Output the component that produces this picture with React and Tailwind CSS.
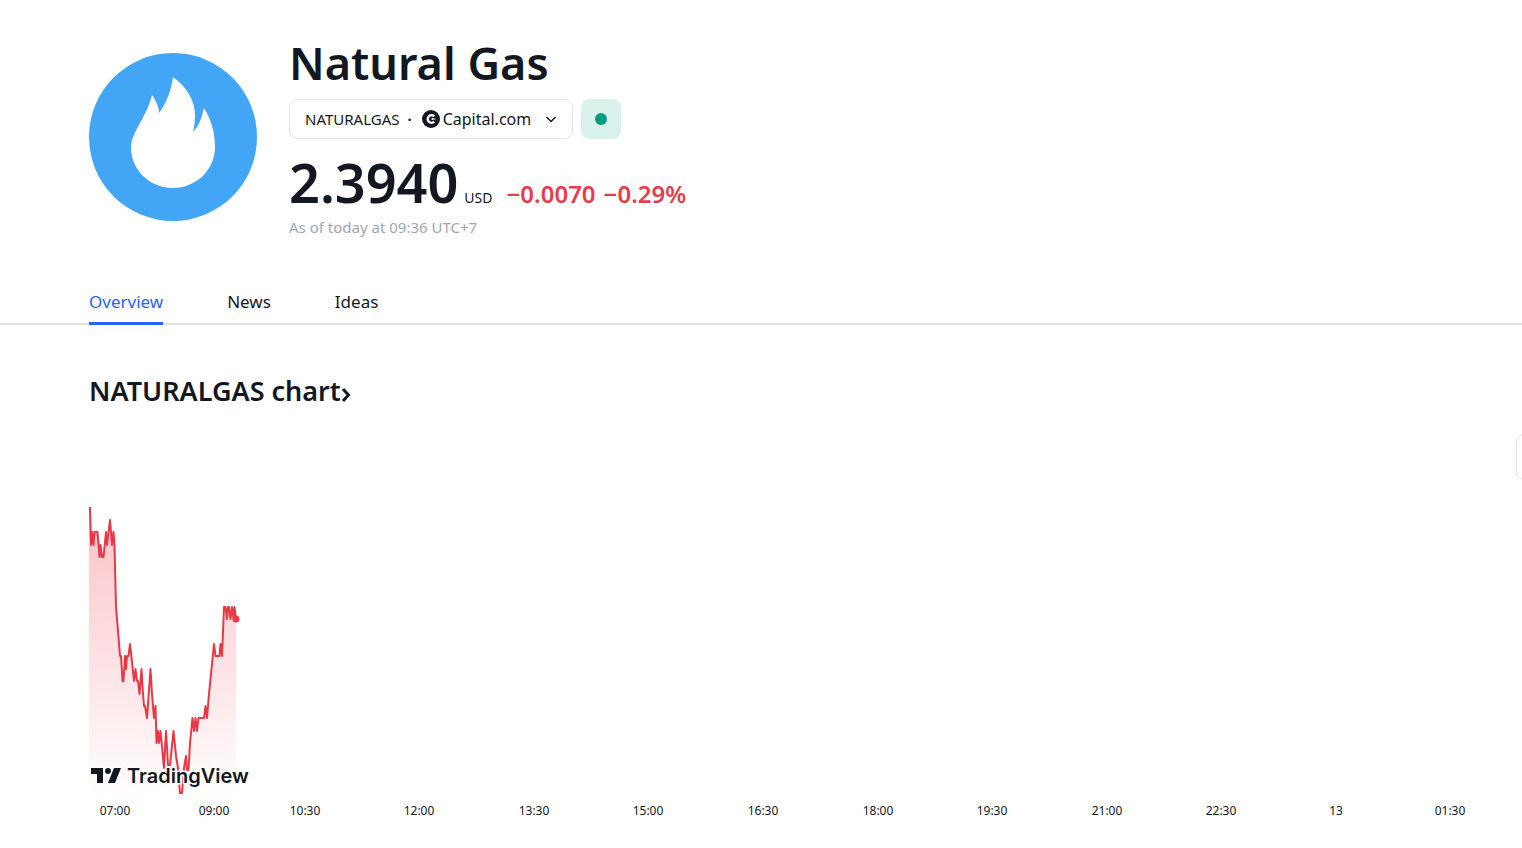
const timeMarks = [
  { label: "07:00", x: 26 },
  { label: "09:00", x: 125 },
  { label: "10:30", x: 216 },
  { label: "12:00", x: 330 },
  { label: "13:30", x: 445 },
  { label: "15:00", x: 559 },
  { label: "16:30", x: 674 },
  { label: "18:00", x: 789 },
  { label: "19:30", x: 903 },
  { label: "21:00", x: 1018 },
  { label: "22:30", x: 1132 },
  { label: "13", x: 1247 },
  { label: "01:30", x: 1361 },
];

const pricePath =
  "M1 7 L2 45 L3 32 L4.5 45 L5.5 32 L8.5 32 L10.5 57 L11.5 45 L13 57 L14.5 57 L17 32 L18 45 L21 20 L23 45 L24.5 32 L25.5 45 L27 107 L29 131 L31 156 L32 156 L33.5 181 L34.5 181 L36 156 L37 169 L38 156 L39.5 156 L41 144 L43 162 L45 181 L46.5 169 L48 181 L49 181 L50.5 194 L52.5 169 L54 194 L55 206 L56 206 L58 218 L61.5 169 L63 194 L65 218 L66.5 206 L67.5 243 L69 231 L70 243 L71.5 231 L75 268 L77 231 L79 265 L81 265 L84.5 231 L87 256 L89 268 L91 293 L93 293 L95 268 L97 256 L98 270 L99.5 270 L101 243 L103.5 218 L105 231 L106.5 218 L108 231 L109.5 218 L115 218 L116.5 206 L118 218 L120 194 L125 144 L126.5 156 L130.5 156 L131.5 144 L133 156 L135 107 L136.5 107 L138 119 L139 107 L140 107 L141.5 119 L143 107 L144.5 119 L145.5 107 L147 119";

function FlameLogo() {
  return (
    <svg viewBox="0 0 168 168" className="h-[168px] w-[168px] shrink-0" aria-hidden="true">
      <circle cx="84" cy="84" r="84" fill="#42a5f5" />
      <path
        d="M84 24C98 34 106 48 106 62C106 69 105 74 104 79C110 73 113 64 115 55C121 65 126 77 126 94C126 117 107 135 84 135C61 135 42 117 42 95C42 79 57 66 63 42C68 49 70 55 70 60C77 51 82 38 84 24Z"
        fill="#fff"
      />
    </svg>
  );
}

function CapitalLogo() {
  return (
    <svg viewBox="0 0 18 18" className="h-[18px] w-[18px]" aria-hidden="true">
      <circle cx="9" cy="9" r="9" fill="#131722" />
      <path d="M12.2 6.3A3.8 3.8 0 1 0 12.2 11.7" fill="none" stroke="#fff" strokeWidth="2.4" />
      <circle cx="10.4" cy="9" r="1" fill="#fff" />
      <path d="M11 8.3h2.6v1.4H11Z" fill="#d8b18c" />
    </svg>
  );
}

function SymbolHeader() {
  return (
    <header className="flex gap-8 px-[89px] pt-9">
      <div className="pt-[17px]">
        <FlameLogo />
      </div>
      <div>
        <h1 className="text-[45px] leading-[54px] font-semibold">Natural Gas</h1>
        <div className="mt-[9px] flex gap-2">
          <button
            type="button"
            className="flex h-10 items-center rounded-lg border border-[#e0e3eb] px-[15px] text-[15px]"
          >
            <span>NATURALGAS</span>
            <span className="mr-[10px] ml-2 font-bold">·</span>
            <CapitalLogo />
            <span className="ml-[3px] text-base">Capital.com</span>
            <svg viewBox="0 0 12 12" className="ml-[14px] h-3 w-3" aria-hidden="true">
              <path d="M1.5 4 6 8.5 10.5 4" fill="none" stroke="currentColor" strokeWidth="1.5" />
            </svg>
          </button>
          <button
            type="button"
            aria-label="Market open"
            className="flex h-10 w-10 items-center justify-center rounded-lg bg-[#daf2ee]"
          >
            <span className="h-3 w-3 rounded-full bg-[#089981]" />
          </button>
        </div>
        <div className="mt-[15px] flex items-baseline leading-none">
          <span className="text-[54px] leading-[56px] font-semibold">2.3940</span>
          <span className="ml-[6px] text-sm leading-none">USD</span>
          <span className="ml-[14px] text-2xl leading-none font-semibold text-[#e63d4b]">−0.0070</span>
          <span className="ml-2 text-2xl leading-none font-semibold text-[#e63d4b]">−0.29%</span>
        </div>
        <p className="mt-[5px] text-[15px] leading-6 text-[#a3a6af]">As of today at 09:36 UTC+7</p>
      </div>
    </header>
  );
}

function Tabs() {
  return (
    <nav className="mt-[51px] flex gap-16 border-b-2 border-[#e0e3e6] px-[89px] text-[17px] leading-6">
      <a href="#overview" className="-mb-[2px] border-b-3 border-[#2962ff] pb-2 text-[#2962ff]">
        Overview
      </a>
      <a href="#news">News</a>
      <a href="#ideas">Ideas</a>
    </nav>
  );
}

function PriceChart() {
  return (
    <svg width="1433" height="330" className="block max-w-none" role="img" aria-label="NATURALGAS price">
      <defs>
        <linearGradient id="priceFill" x1="0" y1="0" x2="0" y2="1">
          <stop offset="0" stopColor="#f23645" stopOpacity="0.3" />
          <stop offset="1" stopColor="#f23645" stopOpacity="0.01" />
        </linearGradient>
      </defs>
      <path d={`${pricePath} V295 H0 V7 Z`} fill="url(#priceFill)" />
      <path d={pricePath} fill="none" stroke="#e83846" strokeWidth="2" strokeLinejoin="round" />
      <circle cx="147" cy="119" r="3.5" fill="#f23645" />
      <g fill="#131722" stroke="#fff" strokeWidth="3" strokeLinejoin="round" paintOrder="stroke">
        <path d="M2 268H14V283H8V274H2Z" />
        <circle cx="19" cy="271" r="3" />
        <path d="M25 268H32L26 283H19Z" />
        <text x="38" y="283" className="font-['Inter',sans-serif] text-[20px] font-semibold">
          TradingView
        </text>
      </g>
      <g fill="#131722" textAnchor="middle" className="text-[12px]">
        {timeMarks.map((mark) => (
          <text key={mark.label} x={mark.x} y="315">
            {mark.label}
          </text>
        ))}
      </g>
    </svg>
  );
}

export default function App() {
  return (
    <div className="min-h-screen overflow-hidden bg-white font-['Noto_Sans',sans-serif] text-[#131722]">
      <SymbolHeader />
      <Tabs />
      <main className="pl-[89px]">
        <h2 className="mt-12 text-[27px] leading-9 font-semibold">
          <a href="#chart" className="inline-flex items-center">
            NATURALGAS chart
            <svg viewBox="0 0 10 16" className="mt-2 h-4 w-[10px]" aria-hidden="true">
              <path d="M2 2 7.5 8 2 14" fill="none" stroke="currentColor" strokeWidth="3" />
            </svg>
          </a>
        </h2>
        <div className="mt-[25px] flex justify-end">
          <button
            type="button"
            aria-label="Chart options"
            className="-mr-10 h-[46px] w-[46px] rounded-lg border border-[#e0e3eb]"
          />
        </div>
        <div className="mt-5">
          <PriceChart />
        </div>
      </main>
    </div>
  );
}
